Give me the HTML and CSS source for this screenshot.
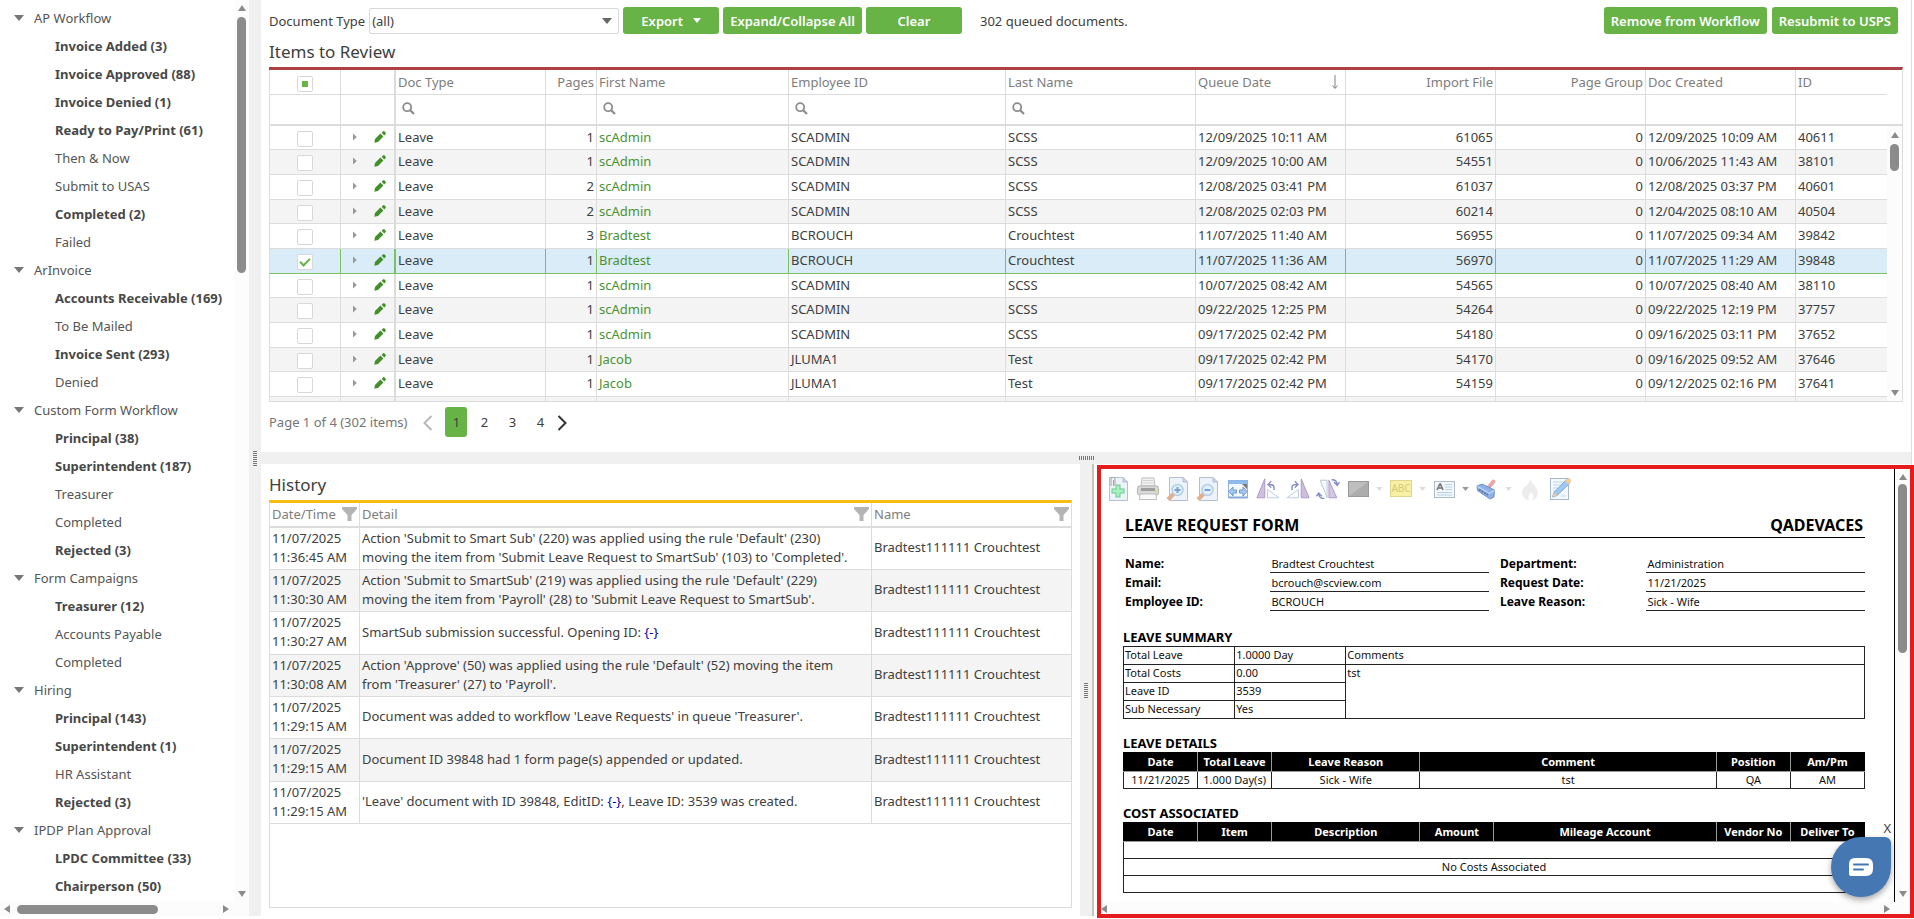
FILE: index.html
```html
<!DOCTYPE html>
<html lang="en">
<head>
  <meta charset="UTF-8" />
  <meta name="viewport" content="width=device-width, initial-scale=1.0"/>
  <title>Workflow - Items to Review</title>
  <link rel="stylesheet" href="styles.css">
</head>
<body>

  <!-- Shared icons -->
  <svg class="sprite" aria-hidden="true">
    <symbol id="pencil" viewBox="0 0 12 12"><path d="M0.300 11.700 1 8 6.400 2.600 9.400 5.600 4 11ZM7.600 1.700 9 .400Q9.900 -0.200 10.600.500L11.500 1.400Q12.200 2.100 11.600 3L10.300 4.400Z" fill="#43902b"/></symbol>
    <symbol id="search" viewBox="0 0 13 13"><circle cx="5.200" cy="5.200" r="4" fill="none" stroke="#8c8c8c" stroke-width="1.800"/><path d="M8.200 8.200 12 12" stroke="#8c8c8c" stroke-width="2.200"/></symbol>
    <symbol id="filter" viewBox="0 0 15 14"><path d="M0 0H15V2L9.500 8V14H5.500V8L0 2Z" fill="#b4b4b4"/></symbol>
    <symbol id="right" viewBox="0 0 4 8"><path d="M0 0.500 3.800 4 0 7.500Z" fill="#999"/></symbol>
    <symbol id="down" viewBox="0 0 10 6"><path d="M0 0H10L5 6Z" fill="currentColor"/></symbol>
    <symbol id="paper" viewBox="0 0 24 24"><path d="M3.500.500H17L21.500 5V23.500H3.500Z" fill="#eef3fa" stroke="#b3bfd3"/><path d="M17 .500V5H21.500Z" fill="#c9d8ec" stroke="#b3bfd3"/></symbol>
    <symbol id="tri" viewBox="0 0 26 24"><path d="M9.500 1V21.500H1Z" fill="#cdbfdf" stroke="#a795c2"/><path d="M12.500 12.500V21.500H25Z" fill="#fafcfe" stroke="#bcc8d8"/><path d="M19.500 13V10Q19.500 7 13.500 7M16.500 3.500 13 7 16.500 10.500" fill="none" stroke="#8289c4" stroke-width="1.500"/></symbol>
  </svg>

  <div class="app">

    <!-- Workflow tree -->
    <nav class="sidebar">
      <div class="sidebar-body">
        <div class="tree">
          <button class="group"><svg><use href="#down"/></svg>AP Workflow</button>
          <a href="#" class="active">Invoice Added (3)</a>
          <a href="#" class="active">Invoice Approved (88)</a>
          <a href="#" class="active">Invoice Denied (1)</a>
          <a href="#" class="active">Ready to Pay/Print (61)</a>
          <a href="#">Then &amp; Now</a>
          <a href="#">Submit to USAS</a>
          <a href="#" class="active">Completed (2)</a>
          <a href="#">Failed</a>
          <button class="group"><svg><use href="#down"/></svg>ArInvoice</button>
          <a href="#" class="active">Accounts Receivable (169)</a>
          <a href="#">To Be Mailed</a>
          <a href="#" class="active">Invoice Sent (293)</a>
          <a href="#">Denied</a>
          <button class="group"><svg><use href="#down"/></svg>Custom Form Workflow</button>
          <a href="#" class="active">Principal (38)</a>
          <a href="#" class="active">Superintendent (187)</a>
          <a href="#">Treasurer</a>
          <a href="#">Completed</a>
          <a href="#" class="active">Rejected (3)</a>
          <button class="group"><svg><use href="#down"/></svg>Form Campaigns</button>
          <a href="#" class="active">Treasurer (12)</a>
          <a href="#">Accounts Payable</a>
          <a href="#">Completed</a>
          <button class="group"><svg><use href="#down"/></svg>Hiring</button>
          <a href="#" class="active">Principal (143)</a>
          <a href="#" class="active">Superintendent (1)</a>
          <a href="#">HR Assistant</a>
          <a href="#" class="active">Rejected (3)</a>
          <button class="group"><svg><use href="#down"/></svg>IPDP Plan Approval</button>
          <a href="#" class="active">LPDC Committee (33)</a>
          <a href="#" class="active">Chairperson (50)</a>
        </div>
        <div class="vscroll tall"><i class="up"></i><b></b><i class="dn"></i></div>
      </div>
      <div class="hscroll"><i class="lt"></i><b></b><i class="rt"></i></div>
    </nav>

    <div class="splitter vertical"><span></span></div>

    <div class="main">

      <!-- Items to review -->
      <section class="review">
        <div class="toolbar">
          <label for="docType">Document Type</label>
          <div class="combo">
            <select id="docType"><option>(all)</option></select>
            <svg><use href="#down"/></svg>
          </div>
          <button class="btn wide">Export <svg><use href="#down"/></svg></button>
          <button class="btn">Expand/Collapse All</button>
          <button class="btn wide">Clear</button>
          <span class="count">302 queued documents.</span>
          <div class="right-buttons">
            <button class="btn">Remove from Workflow</button>
            <button class="btn">Resubmit to USPS</button>
          </div>
        </div>
        <h2>Items to Review</h2>

        <div class="grid">
          <table class="items head">
            <colgroup><col class="c-check"><col class="c-tools"><col class="c-type"><col class="c-pages"><col class="c-first"><col class="c-emp"><col class="c-last"><col class="c-date"><col class="c-date"><col class="c-date"><col class="c-date"><col class="c-id"></colgroup>
            <thead>
              <tr>
                <th class="check"><input type="checkbox" class="some" aria-label="Select all"></th>
                <th class="tools"></th>
                <th>Doc Type</th>
                <th class="num">Pages</th>
                <th>First Name</th>
                <th>Employee ID</th>
                <th>Last Name</th>
                <th><div class="sorted">Queue Date <svg viewBox="0 0 6 14"><path d="M3 0V13M0.500 10.500 3 13.500 5.500 10.500" fill="none" stroke="#808080"/></svg></div></th>
                <th class="num">Import File</th>
                <th class="num">Page Group</th>
                <th>Doc Created</th>
                <th>ID</th>
              </tr>
              <tr class="filters">
                <td></td><td class="tools"></td>
                <td><label><svg><use href="#search"/></svg><input type="text" aria-label="Filter Doc Type"></label></td>
                <td></td>
                <td><label><svg><use href="#search"/></svg><input type="text" aria-label="Filter First Name"></label></td>
                <td><label><svg><use href="#search"/></svg><input type="text" aria-label="Filter Employee ID"></label></td>
                <td><label><svg><use href="#search"/></svg><input type="text" aria-label="Filter Last Name"></label></td>
                <td></td><td></td><td></td><td></td><td></td>
              </tr>
            </thead>
          </table>
          <div class="grid-body">
            <table class="items rows">
              <colgroup><col class="c-check"><col class="c-tools"><col class="c-type"><col class="c-pages"><col class="c-first"><col class="c-emp"><col class="c-last"><col class="c-date"><col class="c-date"><col class="c-date"><col class="c-date"><col class="c-id"></colgroup>
              <tbody>
                <tr><td class="check"><input type="checkbox" aria-label="Select 40611"></td><td class="tools"><button><svg class="exp"><use href="#right"/></svg></button><button><svg class="pen"><use href="#pencil"/></svg></button></td><td>Leave</td><td class="num">1</td><td><a href="#">scAdmin</a></td><td>SCADMIN</td><td>SCSS</td><td>12/09/2025 10:11 AM</td><td class="num">61065</td><td class="num">0</td><td>12/09/2025 10:09 AM</td><td>40611</td></tr>
                <tr><td class="check"><input type="checkbox" aria-label="Select 38101"></td><td class="tools"><button><svg class="exp"><use href="#right"/></svg></button><button><svg class="pen"><use href="#pencil"/></svg></button></td><td>Leave</td><td class="num">1</td><td><a href="#">scAdmin</a></td><td>SCADMIN</td><td>SCSS</td><td>12/09/2025 10:00 AM</td><td class="num">54551</td><td class="num">0</td><td>10/06/2025 11:43 AM</td><td>38101</td></tr>
                <tr><td class="check"><input type="checkbox" aria-label="Select 40601"></td><td class="tools"><button><svg class="exp"><use href="#right"/></svg></button><button><svg class="pen"><use href="#pencil"/></svg></button></td><td>Leave</td><td class="num">2</td><td><a href="#">scAdmin</a></td><td>SCADMIN</td><td>SCSS</td><td>12/08/2025 03:41 PM</td><td class="num">61037</td><td class="num">0</td><td>12/08/2025 03:37 PM</td><td>40601</td></tr>
                <tr><td class="check"><input type="checkbox" aria-label="Select 40504"></td><td class="tools"><button><svg class="exp"><use href="#right"/></svg></button><button><svg class="pen"><use href="#pencil"/></svg></button></td><td>Leave</td><td class="num">2</td><td><a href="#">scAdmin</a></td><td>SCADMIN</td><td>SCSS</td><td>12/08/2025 02:03 PM</td><td class="num">60214</td><td class="num">0</td><td>12/04/2025 08:10 AM</td><td>40504</td></tr>
                <tr><td class="check"><input type="checkbox" aria-label="Select 39842"></td><td class="tools"><button><svg class="exp"><use href="#right"/></svg></button><button><svg class="pen"><use href="#pencil"/></svg></button></td><td>Leave</td><td class="num">3</td><td><a href="#">Bradtest</a></td><td>BCROUCH</td><td>Crouchtest</td><td>11/07/2025 11:40 AM</td><td class="num">56955</td><td class="num">0</td><td>11/07/2025 09:34 AM</td><td>39842</td></tr>
                <tr class="selected"><td class="check"><input type="checkbox" checked aria-label="Select 39848"></td><td class="tools"><button><svg class="exp"><use href="#right"/></svg></button><button><svg class="pen"><use href="#pencil"/></svg></button></td><td>Leave</td><td class="num">1</td><td><a href="#">Bradtest</a></td><td>BCROUCH</td><td>Crouchtest</td><td>11/07/2025 11:36 AM</td><td class="num">56970</td><td class="num">0</td><td>11/07/2025 11:29 AM</td><td>39848</td></tr>
                <tr><td class="check"><input type="checkbox" aria-label="Select 38110"></td><td class="tools"><button><svg class="exp"><use href="#right"/></svg></button><button><svg class="pen"><use href="#pencil"/></svg></button></td><td>Leave</td><td class="num">1</td><td><a href="#">scAdmin</a></td><td>SCADMIN</td><td>SCSS</td><td>10/07/2025 08:42 AM</td><td class="num">54565</td><td class="num">0</td><td>10/07/2025 08:40 AM</td><td>38110</td></tr>
                <tr><td class="check"><input type="checkbox" aria-label="Select 37757"></td><td class="tools"><button><svg class="exp"><use href="#right"/></svg></button><button><svg class="pen"><use href="#pencil"/></svg></button></td><td>Leave</td><td class="num">1</td><td><a href="#">scAdmin</a></td><td>SCADMIN</td><td>SCSS</td><td>09/22/2025 12:25 PM</td><td class="num">54264</td><td class="num">0</td><td>09/22/2025 12:19 PM</td><td>37757</td></tr>
                <tr><td class="check"><input type="checkbox" aria-label="Select 37652"></td><td class="tools"><button><svg class="exp"><use href="#right"/></svg></button><button><svg class="pen"><use href="#pencil"/></svg></button></td><td>Leave</td><td class="num">1</td><td><a href="#">scAdmin</a></td><td>SCADMIN</td><td>SCSS</td><td>09/17/2025 02:42 PM</td><td class="num">54180</td><td class="num">0</td><td>09/16/2025 03:11 PM</td><td>37652</td></tr>
                <tr><td class="check"><input type="checkbox" aria-label="Select 37646"></td><td class="tools"><button><svg class="exp"><use href="#right"/></svg></button><button><svg class="pen"><use href="#pencil"/></svg></button></td><td>Leave</td><td class="num">1</td><td><a href="#">Jacob</a></td><td>JLUMA1</td><td>Test</td><td>09/17/2025 02:42 PM</td><td class="num">54170</td><td class="num">0</td><td>09/16/2025 09:52 AM</td><td>37646</td></tr>
                <tr><td class="check"><input type="checkbox" aria-label="Select 37641"></td><td class="tools"><button><svg class="exp"><use href="#right"/></svg></button><button><svg class="pen"><use href="#pencil"/></svg></button></td><td>Leave</td><td class="num">1</td><td><a href="#">Jacob</a></td><td>JLUMA1</td><td>Test</td><td>09/17/2025 02:42 PM</td><td class="num">54159</td><td class="num">0</td><td>09/12/2025 02:16 PM</td><td>37641</td></tr>
                <tr><td></td><td class="tools"></td><td></td><td></td><td></td><td></td><td></td><td></td><td></td><td></td><td></td><td></td></tr>
              </tbody>
            </table>
            <div class="vscroll short"><i class="up"></i><b></b><i class="dn"></i></div>
          </div>
        </div>

        <div class="pager">
          <span>Page 1 of 4 (302 items)</span>
          <button class="prev" aria-label="Previous"><svg viewBox="0 0 10 16"><path d="M8.500 1 1.500 8 8.500 15" fill="none" stroke="#b8b8b8" stroke-width="2"/></svg></button>
          <button class="current">1</button>
          <button>2</button>
          <button>3</button>
          <button>4</button>
          <button class="next" aria-label="Next"><svg viewBox="0 0 10 16"><path d="M1.500 1 8.500 8 1.500 15" fill="none" stroke="#333" stroke-width="2"/></svg></button>
        </div>
      </section>

      <div class="splitter horizontal"><span></span></div>

      <div class="bottom">

        <!-- History -->
        <section class="history">
          <h2>History</h2>
          <div class="history-box">
            <table>
              <colgroup><col class="h-date"><col><col class="h-name"></colgroup>
              <thead>
                <tr>
                  <th><div>Date/Time <svg><use href="#filter"/></svg></div></th>
                  <th><div>Detail <svg><use href="#filter"/></svg></div></th>
                  <th><div>Name <svg><use href="#filter"/></svg></div></th>
                </tr>
              </thead>
              <tbody>
                <tr><td>11/07/2025<br>11:36:45 AM</td><td>Action 'Submit to Smart Sub' (220) was applied using the rule 'Default' (230)<br>moving the item from 'Submit Leave Request to SmartSub' (103) to 'Completed'.</td><td>Bradtest111111 Crouchtest</td></tr>
                <tr><td>11/07/2025<br>11:30:30 AM</td><td>Action 'Submit to SmartSub' (219) was applied using the rule 'Default' (229)<br>moving the item from 'Payroll' (28) to 'Submit Leave Request to SmartSub'.</td><td>Bradtest111111 Crouchtest</td></tr>
                <tr><td>11/07/2025<br>11:30:27 AM</td><td>SmartSub submission successful. Opening ID: <a href="#">{-}</a></td><td>Bradtest111111 Crouchtest</td></tr>
                <tr><td>11/07/2025<br>11:30:08 AM</td><td>Action 'Approve' (50) was applied using the rule 'Default' (52) moving the item<br>from 'Treasurer' (27) to 'Payroll'.</td><td>Bradtest111111 Crouchtest</td></tr>
                <tr><td>11/07/2025<br>11:29:15 AM</td><td>Document was added to workflow 'Leave Requests' in queue 'Treasurer'.</td><td>Bradtest111111 Crouchtest</td></tr>
                <tr><td>11/07/2025<br>11:29:15 AM</td><td>Document ID 39848 had 1 form page(s) appended or updated.</td><td>Bradtest111111 Crouchtest</td></tr>
                <tr><td>11/07/2025<br>11:29:15 AM</td><td>'Leave' document with ID 39848, EditID: <a href="#">{-}</a>, Leave ID: 3539 was created.</td><td>Bradtest111111 Crouchtest</td></tr>
              </tbody>
            </table>
          </div>
        </section>

        <div class="splitter vertical"><span></span></div>

        <!-- Document preview -->
        <section class="preview">
          <div class="preview-body">
            <div class="page">
              <div class="doc-tools">
                <button aria-label="Add page"><svg viewBox="0 0 24 24"><use href="#paper"/><path d="M5.500 14H18.500M12 7.500V20.500" stroke="#6cc793" stroke-width="5"/><path d="M6.500 14H17.500M12 8.500V19.500" stroke="#a6f3c0" stroke-width="3"/><path d="M5 9V2Q5 0 7 0T9 2V7Q9 8.500 7.500 8.500V3" fill="none" stroke="#a3a3a3"/></svg></button>
                <button aria-label="Print"><svg viewBox="0 0 24 24"><path d="M5 9 6 1H18L19 9Z" fill="#f4f4f4" stroke="#b9b9b9"/><path d="M7 3.500H17M6.500 6H17.500" stroke="#d0d0d0"/><rect x="1.500" y="9" width="21" height="9" rx="2" fill="#d8d8d8" stroke="#b5b5b5"/><path d="M5 12.500H19" stroke="#9d9d9d" stroke-width="3"/><path d="M4 17 3.500 22.500H20.500L20 17Z" fill="#fafafa" stroke="#bdbdbd"/><circle cx="20" cy="14" r="1" fill="#dce36d"/></svg></button>
                <button aria-label="Zoom in"><svg viewBox="0 0 24 24"><use href="#paper"/><path d="M7.500 17 2 22.500" stroke="#e0b08c" stroke-width="4"/><circle cx="11.500" cy="13" r="5.500" fill="#e1f1fb" stroke="#b3cfe3" stroke-width="1.500"/><path d="M8.500 13H14.500M11.500 10V16" stroke="#7aa0d8" stroke-width="2"/></svg></button>
                <button aria-label="Zoom out"><svg viewBox="0 0 24 24"><use href="#paper"/><path d="M7.500 17 2 22.500" stroke="#e0b08c" stroke-width="4"/><circle cx="11.500" cy="13" r="5.500" fill="#e1f1fb" stroke="#b3cfe3" stroke-width="1.500"/><path d="M8.500 13H14.500" stroke="#7aa0d8" stroke-width="2"/></svg></button>
                <button aria-label="Fit width"><svg viewBox="0 0 24 24"><rect x="2.500" y="3.500" width="19" height="17" fill="#f3f8fd" stroke="#8fb0dc"/><rect x="2.500" y="3.500" width="19" height="3.500" fill="#8dbbee"/><path d="M2.500 20.500H21.500" stroke="#8aa9d6" stroke-width="2"/><path d="M16 7H21V12Z" fill="#777"/><path d="M3 14.500 7 10V13H10.500V16H7V19ZM21 14.500 17 10V13H13.500V16H17V19Z" fill="#a8c9f2" stroke="#7197cf"/></svg></button>
                <button aria-label="Rotate left"><svg viewBox="0 0 26 24"><use href="#tri"/></svg></button>
                <button aria-label="Rotate right"><svg viewBox="0 0 26 24"><use href="#tri" transform="matrix(-1 0 0 1 26 0)"/></svg></button>
                <button aria-label="Rotate 180"><svg viewBox="0 0 26 24"><path d="M4.500 2.500H12V21.500Z" fill="#f4f9fc" stroke="#b5c4d0"/><path d="M14 2.500V21.500H22.500Z" fill="#d3c7e4" stroke="#a795c2"/><path d="M17 2Q22.500 1.500 23 7.500M19.500 4.500 23 8 25.500 4.500M9 22Q3.500 23 3 17M0.500 20 3 16.500 6.500 20" fill="none" stroke="#8289c4" stroke-width="1.500"/></svg></button>
                <button aria-label="Redact"><svg viewBox="0 0 24 24"><rect x="2.500" y="4.500" width="20" height="15" fill="#adadad" stroke="#999"/><path d="M3 5H22L3 19Z" fill="#bebebe"/></svg></button>
                <svg class="caret off"><use href="#down"/></svg>
                <button aria-label="Highlight" class="abc"><span>ABC</span></button>
                <svg class="caret off"><use href="#down"/></svg>
                <button aria-label="Text"><svg viewBox="0 0 24 24"><rect x="2.500" y="4.500" width="20" height="16" fill="#f1f7fb" stroke="#b0bccb"/><path d="M13 7.500H20M13 10H20M13 12.500H20M5 15.500H20M5 18H20" stroke="#b8d3e8"/><path d="M5 13 7.800 7H8.500L11 13M6 11H10" fill="none" stroke="#777" stroke-width="1.600"/></svg></button>
                <svg class="caret"><use href="#down"/></svg>
                <button aria-label="Stamp"><svg viewBox="0 0 24 24"><path d="M14 10 18.500 4.500" stroke="#e8a6a6" stroke-width="4" stroke-linecap="round"/><path d="M2 9 7 7 19.500 13 19 20 15 22 2.500 13.500Z" fill="#8db1e6" stroke="#6f92cc"/><path d="M2.500 9.500 14.500 16.500 19.500 13.500" fill="none" stroke="#b7d1f4" stroke-width="1.500"/><path d="M4 12.500 13 18" stroke="#5f79a8" stroke-width="2" stroke-dasharray="2 1"/></svg></button>
                <svg class="caret off"><use href="#down"/></svg>
                <button aria-label="Burn"><svg viewBox="0 0 24 24"><path d="M12 1Q13 5 16.500 8.500 20.500 13 19.500 17.500 18.500 22 14.500 23.500 17 19.500 13.500 15 9 18.500 11 23.500 4.500 22 4 16 4 11 8.500 8.500 12 6 12 1Z" fill="#ececec"/></svg></button>
                <button aria-label="Edit"><svg viewBox="0 0 24 24"><rect x="2.500" y="1.500" width="18" height="21" fill="#f4f9fd" stroke="#a8b9ce"/><path d="M5 5H15M5 8H13M5 11H11M5 14H8M13 19H18" stroke="#bdd5ea"/><path d="M4.500 20 6 15.500 18.500 2.500 22 6 9 18.500Z" fill="#9fc9f0" stroke="#7aa8d8"/><path d="M17 4 19 2Q21 0.500 22.500 2T22.500 5.500L20.500 7.500ZM4.500 20 6 15.500 9 18.500Z" fill="#f1cf9c"/></svg></button>
              </div>

              <!-- Leave request form -->
              <div class="form">
                <div class="form-title"><h3>LEAVE REQUEST FORM</h3><h3>QADEVACES</h3></div>
                <dl class="fields">
                  <dt>Name:</dt><dd>Bradtest Crouchtest</dd><dt>Department:</dt><dd>Administration</dd>
                  <dt>Email:</dt><dd>bcrouch@scview.com</dd><dt>Request Date:</dt><dd>11/21/2025</dd>
                  <dt>Employee ID:</dt><dd>BCROUCH</dd><dt>Leave Reason:</dt><dd>Sick - Wife</dd>
                </dl>

                <h4>LEAVE SUMMARY</h4>
                <table class="summary">
                  <colgroup><col class="w15"><col class="w15"><col></colgroup>
                  <tr><td>Total Leave</td><td>1.0000 Day</td><td>Comments</td></tr>
                  <tr><td>Total Costs</td><td>0.00</td><td rowspan="3">tst</td></tr>
                  <tr><td>Leave ID</td><td>3539</td></tr>
                  <tr><td>Sub Necessary</td><td>Yes</td></tr>
                </table>

                <h4>LEAVE DETAILS</h4>
                <table class="lines">
                  <colgroup><col class="w10"><col class="w10"><col class="w20"><col class="w40"><col class="w10"><col class="w10"></colgroup>
                  <tr><th>Date</th><th>Total Leave</th><th>Leave Reason</th><th>Comment</th><th>Position</th><th>Am/Pm</th></tr>
                  <tr><td>11/21/2025</td><td>1.000 Day(s)</td><td>Sick - Wife</td><td>tst</td><td>QA</td><td>AM</td></tr>
                </table>

                <h4>COST ASSOCIATED</h4>
                <table class="lines">
                  <colgroup><col class="w10"><col class="w10"><col class="w20"><col class="w10"><col class="w30"><col class="w10"><col class="w10"></colgroup>
                  <tr><th>Date</th><th>Item</th><th>Description</th><th>Amount</th><th>Mileage Account</th><th>Vendor No</th><th>Deliver To</th></tr>
                  <tr><td colspan="7"></td></tr>
                  <tr><td colspan="7">No Costs Associated</td></tr>
                  <tr><td colspan="7"></td></tr>
                </table>
              </div>
            </div>
            <div class="vscroll doc"><i class="up"></i><b></b><i class="dn"></i></div>
          </div>
          <div class="hscroll doc"><i class="lt"></i><i class="rt"></i></div>
          <div class="frame"></div>

          <!-- Chat widget -->
          <div class="chat">
            <button class="chat-close">X</button>
            <button class="chat-open" aria-label="Chat"><svg viewBox="0 0 24 18"><path d="M6 0H17Q24 0 24 7V11Q24 18 17 18H2Q0 18 0 16V6Q0 0 6 0Z" fill="#fff"/><path d="M5 6.500H19M5 11.500H14" stroke="#4577b3" stroke-width="2" stroke-linecap="round"/></svg></button>
          </div>
        </section>
      </div>
    </div>
  </div>

</body>
</html>
```

FILE: styles.css
```css
/* General page layout and font */
* {
  box-sizing: border-box;
}

body {
  margin: 0;
  font-family: "Noto Sans", "Open Sans", sans-serif;
  font-size: 13px;
  line-height: 18px;
  color: #404040;
  background: #fff;
}

button {
  margin: 0;
  padding: 0;
  border: none;
  background: none;
  font: inherit;
  color: inherit;
  cursor: pointer;
}

a {
  text-decoration: none;
}

table {
  width: 100%;
  table-layout: fixed;
  border-spacing: 0;
}

th {
  font-weight: normal;
  text-align: left;
}

h2 {
  margin: 0;
  font-size: 17px;
  line-height: 24px;
  font-weight: normal;
}

.sprite {
  display: none;
}

.app {
  display: grid;
  grid-template-columns: 249px 12px 1fr;
  height: 100vh;
  padding: 0 2px 3px 0;
}

/* Workflow tree */
.sidebar {
  display: flex;
  flex-direction: column;
  min-height: 0;
}

.sidebar-body {
  display: flex;
  flex: 1;
  min-height: 0;
}

.tree {
  flex: 1;
  padding-top: 4px;
  overflow: hidden;
}

.tree a,
.group {
  display: flex;
  align-items: center;
  height: 28px;
  color: #555;
  white-space: nowrap;
}

.tree a {
  padding-left: 55px;
}

.tree .active {
  font-weight: bold;
  color: #484848;
}

.group {
  gap: 10px;
  padding-left: 14px;
}

.group svg {
  width: 10px;
  height: 6px;
  color: #777;
}

/* Scrollbars */
.vscroll {
  display: flex;
  flex-direction: column;
  align-items: center;
  width: 15px;
  padding: 5px 0;
  background: #fcfcfc;
}

.hscroll {
  display: flex;
  align-items: center;
  height: 14px;
  padding: 0 20px 0 4px;
  background: #fcfcfc;
}

.vscroll b,
.hscroll b {
  border-radius: 5px;
  background: #8b8b8b;
}

.vscroll b {
  width: 9px;
  height: 256px;
  margin-top: 6px;
}

.hscroll b {
  width: 141px;
  height: 9px;
  margin-left: 7px;
}

.vscroll i,
.hscroll i {
  border: 4px solid transparent;
}

.up {
  border-top: none !important;
  border-bottom: 6px solid #8b8b8b !important;
}

.dn {
  margin-top: auto;
  border-bottom: none !important;
  border-top: 6px solid #8b8b8b !important;
}

.lt {
  border-left: none !important;
  border-right: 6px solid #8b8b8b !important;
}

.rt {
  margin-left: auto;
  border-right: none !important;
  border-left: 6px solid #8b8b8b !important;
}

.vscroll.short {
  padding-top: 6px;
}

.vscroll.short b {
  height: 27px;
}

.vscroll.doc b {
  height: 169px;
  margin-top: 4px;
}

.hscroll.doc {
  padding-left: 0;
}

/* Splitters */
.splitter {
  display: flex;
  align-items: center;
  justify-content: center;
  background: #f0f0f0;
}

.vertical span {
  width: 4px;
  height: 15px;
  background: repeating-linear-gradient(#777 0 1px, #f0f0f0 1px 2px);
}

.horizontal span {
  width: 15px;
  height: 4px;
  background: repeating-linear-gradient(90deg, #777 0 1px, #f0f0f0 1px 2px);
}

.main {
  display: grid;
  grid-template-rows: 1fr 12px 1fr;
  min-width: 0;
  min-height: 0;
  border-right: 1px solid #ddd;
}

/* Review pane */
.review {
  min-height: 0;
  padding: 7px 8px 0;
  overflow: hidden;
}

.toolbar {
  display: flex;
  align-items: center;
  gap: 4px;
  height: 27px;
}

.combo {
  position: relative;
  width: 250px;
}

.combo select {
  display: block;
  appearance: none;
  width: 100%;
  height: 26px;
  padding: 0 2px;
  border: 1px solid #d9d9d9;
  border-radius: 2px;
  background: #fff;
  font: inherit;
  color: inherit;
}

.combo svg {
  position: absolute;
  top: 10px;
  right: 7px;
  width: 10px;
  height: 6px;
  color: #666;
}

.btn {
  display: flex;
  align-items: center;
  justify-content: center;
  gap: 10px;
  height: 27px;
  padding: 0 7px;
  border-radius: 3px;
  background: #67b346;
  color: #fff;
  font-weight: 600;
  white-space: nowrap;
}

.btn.wide {
  width: 96px;
}

.btn svg {
  width: 8px;
  height: 5px;
}

.count {
  margin-left: 14px;
}

.right-buttons {
  display: flex;
  gap: 5px;
  margin: 0 5px 0 auto;
}

.review h2 {
  padding: 6px 0 3px;
  height: 33px;
}

/* Items grid */
.grid {
  border-top: 3px solid #af4045;
  border-right: 1px solid #dcdcdc;
  border-bottom: 1px solid #dcdcdc;
}

.c-check { width: 72px; }
.c-tools { width: 55px; }
.c-type { width: 150px; }
.c-pages { width: 51px; }
.c-first { width: 192px; }
.c-emp { width: 217px; }
.c-last { width: 190px; }
.c-date { width: 150px; }
.c-id { width: 91px; }

.items td,
.items th {
  height: inherit;
  padding: 0 2px 1px;
  border-right: 1px solid #dcdcdc;
  border-bottom: 1px solid #dcdcdc;
  white-space: nowrap;
}

.items td:first-child,
.items th:first-child {
  border-left: 1px solid #dcdcdc;
}

.items td:last-child,
.items th:last-child {
  border-right: none;
}

.items .tools {
  border-right-width: 2px;
}

.items .num {
  text-align: right;
}

.head {
  padding-right: 15px;
  border-bottom: 2px solid #dcdcdc;
  color: #7d7d7d;
}

.head tr {
  height: 25px;
}

.head .filters {
  height: 29px;
}

.items.head .filters td {
  padding-bottom: 2px;
  border-bottom: none;
}

.sorted {
  display: flex;
  align-items: center;
  justify-content: space-between;
  padding-right: 5px;
}

.sorted svg {
  width: 6px;
  height: 14px;
}

.filters label {
  display: flex;
  align-items: center;
  gap: 6px;
  padding-left: 4px;
}

.filters label svg {
  flex: none;
  width: 13px;
  height: 13px;
}

.filters input {
  width: 100%;
  min-width: 0;
  padding: 0;
  border: none;
  outline: none;
  background: none;
  font: inherit;
}

.grid-body {
  display: flex;
  height: 275px;
  overflow: hidden;
}

.grid-body .rows {
  flex: 1;
  min-width: 0;
  width: auto;
  height: max-content;
}

.rows tr {
  height: 25px;
}

.rows tr:nth-child(3n+1) {
  height: 24px;
}

.rows tr:nth-child(even) {
  background: #f4f4f4;
}

.items.rows td {
  padding-bottom: 2px;
}

.rows a {
  color: #4b9230;
}

.rows .tools button {
  display: inline-flex;
  align-items: center;
  justify-content: center;
  width: 10px;
  height: 18px;
  margin-left: 7px;
  vertical-align: top;
}

.rows .tools button + button {
  width: 12px;
  margin-left: 14px;
}

.exp {
  width: 4px;
  height: 8px;
}

.pen {
  width: 12px;
  height: 12px;
}

.rows tr.selected {
  background: #daecf7;
}

.rows .selected td {
  border-color: #7cc062;
}

.rows .selected td:first-child {
  border-left-color: #dcdcdc;
}

.items .check {
  text-align: center;
}

.check input {
  display: inline-flex;
  align-items: center;
  justify-content: center;
  appearance: none;
  width: 16px;
  height: 16px;
  margin: 4px 0 0;
  border: 1px solid #d8d8d8;
  border-radius: 2px;
  background: #fff;
  vertical-align: top;
}

.check .some::before {
  content: "";
  width: 6px;
  height: 6px;
  background: #67b346;
}

.check input:checked::before {
  content: "";
  width: 8px;
  height: 4px;
  margin-bottom: 2px;
  border: solid #67b346;
  border-width: 0 0 2px 2px;
  transform: rotate(-45deg);
}

/* Pager */
.pager {
  display: flex;
  align-items: center;
  gap: 6px;
  margin-top: 5px;
}

.pager span {
  color: #757575;
}

.pager button {
  width: 22px;
  height: 30px;
  border-radius: 3px;
}

.pager .current {
  background: #67b346;
}

.pager svg {
  width: 10px;
  height: 18px;
  vertical-align: middle;
}

.pager .prev {
  margin-left: 4px;
}

.pager .next {
  margin-left: -6px;
}

/* Bottom panes */
.bottom {
  display: grid;
  grid-template-columns: minmax(0, 1fr) 12px minmax(0, 1fr);
  min-height: 0;
}

.history {
  display: flex;
  flex-direction: column;
  min-height: 0;
  padding: 9px 8px 8px;
}

.history h2 {
  height: 27px;
}

.history-box {
  flex: 1;
  min-height: 0;
  border: 1px solid #dcdcdc;
  border-top: 3px solid #f6be13;
  overflow: hidden;
}

.h-date { width: 90px; }
.h-name { width: 199px; }

.history th {
  height: 25px;
  padding: 0 2px 1px;
  border-right: 1px solid #dcdcdc;
  border-bottom: 2px solid #dcdcdc;
  color: #7d7d7d;
}

.history th div {
  display: flex;
  align-items: center;
  justify-content: space-between;
}

.history th svg {
  width: 15px;
  height: 14px;
}

.history td {
  height: 42px;
  padding: 0 2px 2px;
  border-right: 1px solid #dcdcdc;
  border-bottom: 1px solid #dcdcdc;
  line-height: 19px;
  white-space: nowrap;
}

.history tr:nth-child(3n) td {
  height: 43px;
}

.history tr:nth-child(even) td {
  background: #f4f4f4;
}

.history th:last-child,
.history td:last-child {
  border-right: none;
}

.history td a {
  color: #0000a8;
}

/* Document preview */
.preview {
  position: relative;
  display: flex;
  flex-direction: column;
  min-height: 0;
  padding: 5px 1px 0 7px;
  border-left: 2px solid #c4c4c4;
}

.preview-body {
  display: flex;
  flex: 1;
  min-height: 0;
}

.page {
  flex: 1;
  min-width: 0;
  border-right: 1px solid #000;
  overflow: hidden;
}

/* Red highlight round the document */
.frame {
  position: absolute;
  inset: 1px -3px -2px 3px;
  border: 4px solid #e61c1c;
  pointer-events: none;
}

.doc-tools {
  display: flex;
  align-items: center;
  gap: 6px;
  height: 39px;
  padding-left: 5px;
}

.doc-tools button {
  display: flex;
  width: 24px;
  height: 24px;
}

.doc-tools button svg {
  width: 24px;
  height: 24px;
}

.doc-tools .caret {
  width: 7px;
  height: 4px;
  color: #999;
}

.doc-tools .off {
  color: #ddd;
}

.doc-tools .abc {
  align-items: center;
  justify-content: center;
}

.abc span {
  width: 22px;
  border: 1px solid #dfd68d;
  background: #f8f0a5;
  color: #d3ca78;
  font-size: 10px;
  line-height: 15px;
}

.form {
  padding: 6px 29px 0 22px;
  color: #111;
  font-size: 11px;
  line-height: 16px;
}

.form h3,
.form h4 {
  margin: 0;
  color: #000;
}

.form-title {
  display: flex;
  justify-content: space-between;
  padding: 0 2px 1px;
  border-bottom: 1px solid #000;
}

.form h3 {
  font-size: 16px;
  line-height: 22px;
}

.form h4 {
  margin-top: 15px;
  font-size: 13px;
  line-height: 18px;
}

.fields {
  display: grid;
  grid-template-columns: 147fr 218fr 157fr 218fr;
  row-gap: 2px;
  margin: 18px 0 0;
}

.fields dt {
  padding-left: 2px;
  color: #000;
  font-size: 12px;
  font-weight: bold;
}

.fields dt:nth-of-type(even) {
  padding-left: 11px;
}

.fields dd {
  margin: 0;
  padding-left: 1px;
  border-bottom: 1px solid #222;
}

.form table {
  border-collapse: collapse;
}

.fields + h4 {
  margin-top: 17px;
}

.summary td {
  height: 18px;
  padding: 0 1px;
  border: 1px solid #222;
  line-height: 16px;
  vertical-align: top;
}

.lines {
  text-align: center;
}

.lines th {
  height: 19px;
  padding: 0;
  border: 1px solid #999;
  border-top-color: #000;
  background: #000;
  color: #fff;
  font-weight: bold;
  text-align: center;
  white-space: nowrap;
}

.lines th:first-child {
  border-left-color: #000;
}

.lines th:last-child {
  border-right-color: #000;
}

.lines td {
  height: 17px;
  padding: 0;
  border: 1px solid #222;
  white-space: nowrap;
}

.w10 { width: 10%; }
.w15 { width: 15%; }
.w20 { width: 20%; }
.w30 { width: 30%; }
.w40 { width: 40%; }

/* Chat widget */
.chat {
  position: absolute;
  right: 20px;
  bottom: 19px;
  display: flex;
  flex-direction: column;
  align-items: flex-end;
}

.chat-close {
  line-height: 17px;
}

.chat-open {
  display: flex;
  align-items: center;
  justify-content: center;
  width: 60px;
  height: 60px;
  border-radius: 30px 6px 30px 30px;
  background: #4577b3;
  box-shadow: 0 3px 6px rgba(0, 0, 0, 0.35);
}

.chat-open svg {
  width: 24px;
  height: 18px;
}
```
